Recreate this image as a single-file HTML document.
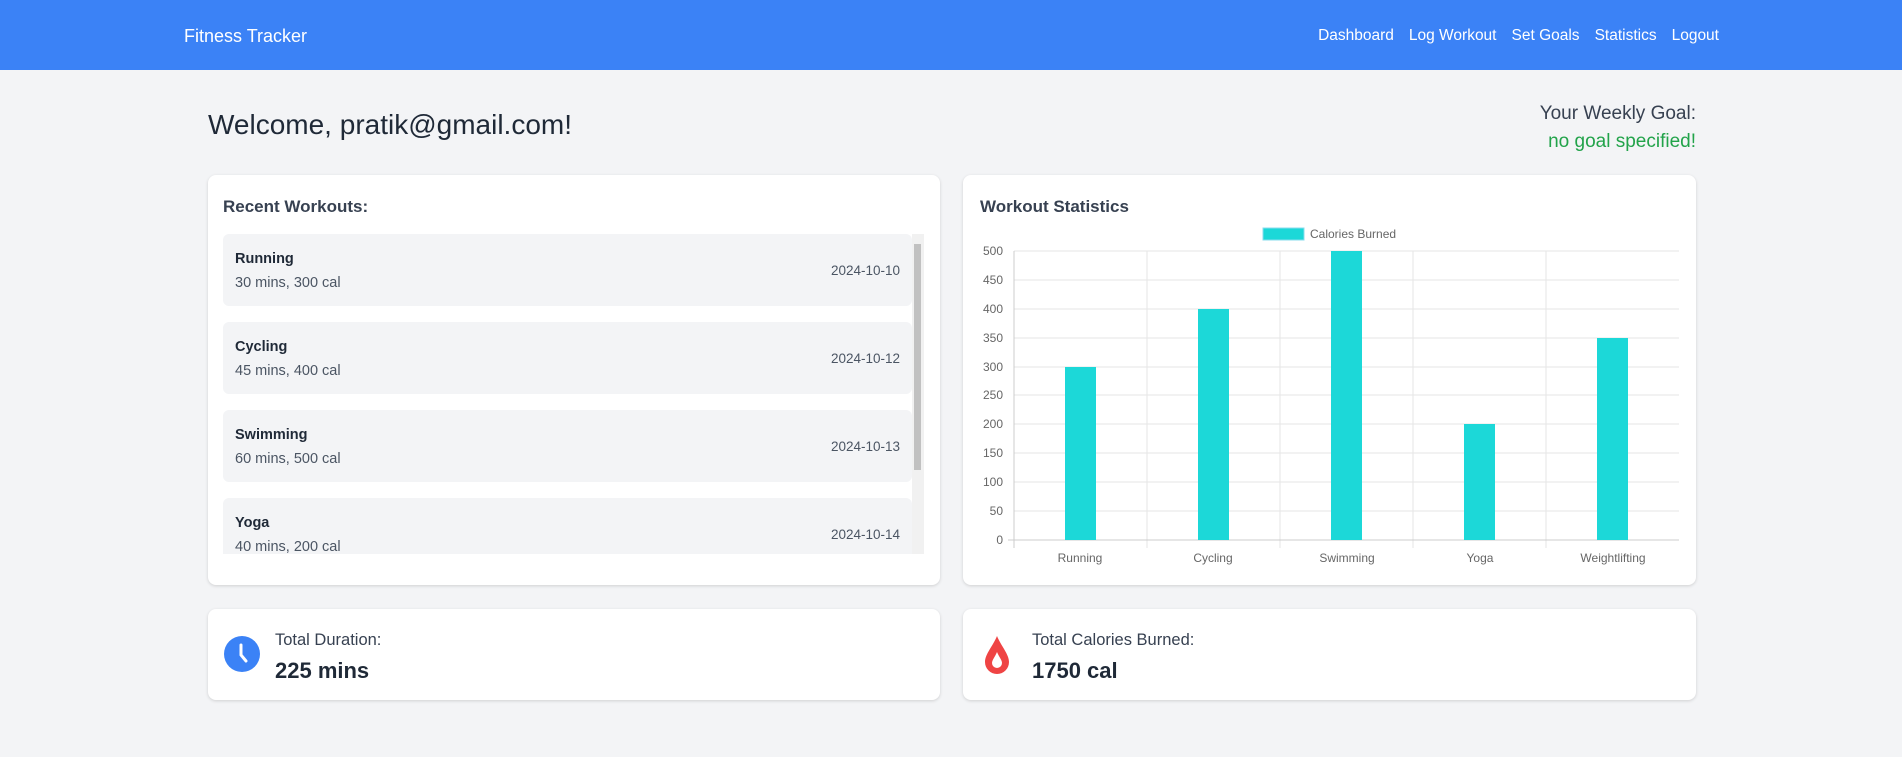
<!DOCTYPE html>
<html><head><meta charset="utf-8"><style>
*{box-sizing:border-box;margin:0;padding:0}
body{width:1902px;height:757px;background:#f3f4f6;font-family:"Liberation Sans",sans-serif;color:#1f2937;position:relative;overflow:hidden}
.nav{position:absolute;left:0;top:0;width:1902px;height:70px;background:#3b82f6;color:#fff}
.brand{position:absolute;left:184px;top:26px;font-size:18px}
.links{position:absolute;right:183px;top:27px;font-size:15.5px;display:flex;gap:15px}
.abs{position:absolute}
.card{position:absolute;background:#fff;border-radius:8px;box-shadow:0 1px 3px rgba(0,0,0,.15)}
.item{position:absolute;left:0;width:689px;height:72px;background:#f3f4f6;border-radius:6px}
.item .n{position:absolute;left:12px;top:17px;font-size:14.5px;font-weight:bold;color:#1f2937}
.item .d{position:absolute;left:12px;top:41px;font-size:14.5px;color:#4b5563}
.item .t{position:absolute;right:12px;top:29px;font-size:13.5px;color:#4b5563}
</style></head><body>
<div class="nav"><div class="brand">Fitness Tracker</div>
<div class="links"><span>Dashboard</span><span>Log Workout</span><span>Set Goals</span><span>Statistics</span><span>Logout</span></div></div>
<div class="abs" style="left:208px;top:109px;font-size:28px;color:#1f2937">Welcome, pratik@gmail.com!</div>
<div class="abs" style="right:206px;top:100px;font-size:19px;color:#374151;text-align:right;line-height:28px">Your Weekly Goal:<br><span style="color:#22a34a">no goal specified!</span></div>

<div class="card" style="left:208px;top:175px;width:732px;height:410px">
<div class="abs" style="left:15px;top:22px;font-size:17px;font-weight:bold;color:#374151">Recent Workouts:</div>
<div class="abs" style="left:15px;top:59px;width:701px;height:320px;overflow:hidden">
<div class="item" style="top:0"><div class="n">Running</div><div class="d">30 mins, 300 cal</div><div class="t">2024-10-10</div></div>
<div class="item" style="top:88px"><div class="n">Cycling</div><div class="d">45 mins, 400 cal</div><div class="t">2024-10-12</div></div>
<div class="item" style="top:176px"><div class="n">Swimming</div><div class="d">60 mins, 500 cal</div><div class="t">2024-10-13</div></div>
<div class="item" style="top:264px"><div class="n">Yoga</div><div class="d">40 mins, 200 cal</div><div class="t">2024-10-14</div></div>
<div class="abs" style="left:689px;top:0;width:12px;height:320px;background:#f1f1f1"></div>
<div class="abs" style="left:691px;top:10px;width:7px;height:226px;background:#c1c1c1"></div>
</div></div>

<div class="card" style="left:963px;top:175px;width:733px;height:410px">
<div class="abs" style="left:17px;top:22px;font-size:17px;font-weight:bold;color:#374151">Workout Statistics</div>
</div>
<svg class="abs" style="left:0;top:0" width="1902" height="757" font-family="Liberation Sans" font-size="12" fill="#666">
<rect x="1263" y="228" width="41" height="12" fill="#1cd8d8" stroke="#8de" />
<text x="1310" y="238">Calories Burned</text>
<g stroke="#e5e5e5">
<line x1="1014" y1="251" x2="1679" y2="251"/><line x1="1014" y1="280" x2="1679" y2="280"/><line x1="1014" y1="309" x2="1679" y2="309"/><line x1="1014" y1="338" x2="1679" y2="338"/><line x1="1014" y1="367" x2="1679" y2="367"/><line x1="1014" y1="395" x2="1679" y2="395"/><line x1="1014" y1="424" x2="1679" y2="424"/><line x1="1014" y1="453" x2="1679" y2="453"/><line x1="1014" y1="482" x2="1679" y2="482"/><line x1="1014" y1="511" x2="1679" y2="511"/>
<line x1="1147" y1="251" x2="1147" y2="548"/><line x1="1280" y1="251" x2="1280" y2="548"/><line x1="1413" y1="251" x2="1413" y2="548"/><line x1="1546" y1="251" x2="1546" y2="548"/>
</g>
<line x1="1014" y1="251" x2="1014" y2="548" stroke="#ccc"/><line x1="1008" y1="540" x2="1679" y2="540" stroke="#ccc"/>
<g fill="#1cd8d8"><rect x="1065" y="367" width="31" height="173"/><rect x="1198" y="309" width="31" height="231"/><rect x="1331" y="251" width="31" height="289"/><rect x="1464" y="424" width="31" height="116"/><rect x="1597" y="338" width="31" height="202"/></g>
<g text-anchor="end"><text x="1003" y="255">500</text><text x="1003" y="284">450</text><text x="1003" y="313">400</text><text x="1003" y="342">350</text><text x="1003" y="371">300</text><text x="1003" y="399">250</text><text x="1003" y="428">200</text><text x="1003" y="457">150</text><text x="1003" y="486">100</text><text x="1003" y="515">50</text><text x="1003" y="544">0</text></g>
<g text-anchor="middle"><text x="1080" y="562">Running</text><text x="1213" y="562">Cycling</text><text x="1347" y="562">Swimming</text><text x="1480" y="562">Yoga</text><text x="1613" y="562">Weightlifting</text></g>
</svg>

<div class="card" style="left:208px;top:609px;width:732px;height:91px">
<svg class="abs" style="left:16px;top:27px" width="36" height="36" viewBox="0 0 36 36"><circle cx="18" cy="18" r="18" fill="#3b82f6"/><path d="M17 9v10l5 6" stroke="#fff" stroke-width="3" fill="none" stroke-linecap="round"/></svg>
<div class="abs" style="left:67px;top:22px;font-size:16.5px;color:#374151">Total Duration:</div>
<div class="abs" style="left:67px;top:49px;font-size:22px;font-weight:bold;color:#1f2937">225 mins</div>
</div>
<div class="card" style="left:963px;top:609px;width:733px;height:91px">
<svg class="abs" style="left:20px;top:25px" width="28" height="40" viewBox="0 0 28 40"><path d="M14 2C10 12 2 20 2 28a12 12 0 0 0 24 0C26 20 18 12 14 2z" fill="#ef4444"/><path d="M14 18c-2 5-5 8-5 11a5 5 0 0 0 10 0c0-3-3-6-5-11z" fill="#fff"/></svg>
<div class="abs" style="left:69px;top:22px;font-size:16.5px;color:#374151">Total Calories Burned:</div>
<div class="abs" style="left:69px;top:49px;font-size:22px;font-weight:bold;color:#1f2937">1750 cal</div>
</div>
</body></html>
